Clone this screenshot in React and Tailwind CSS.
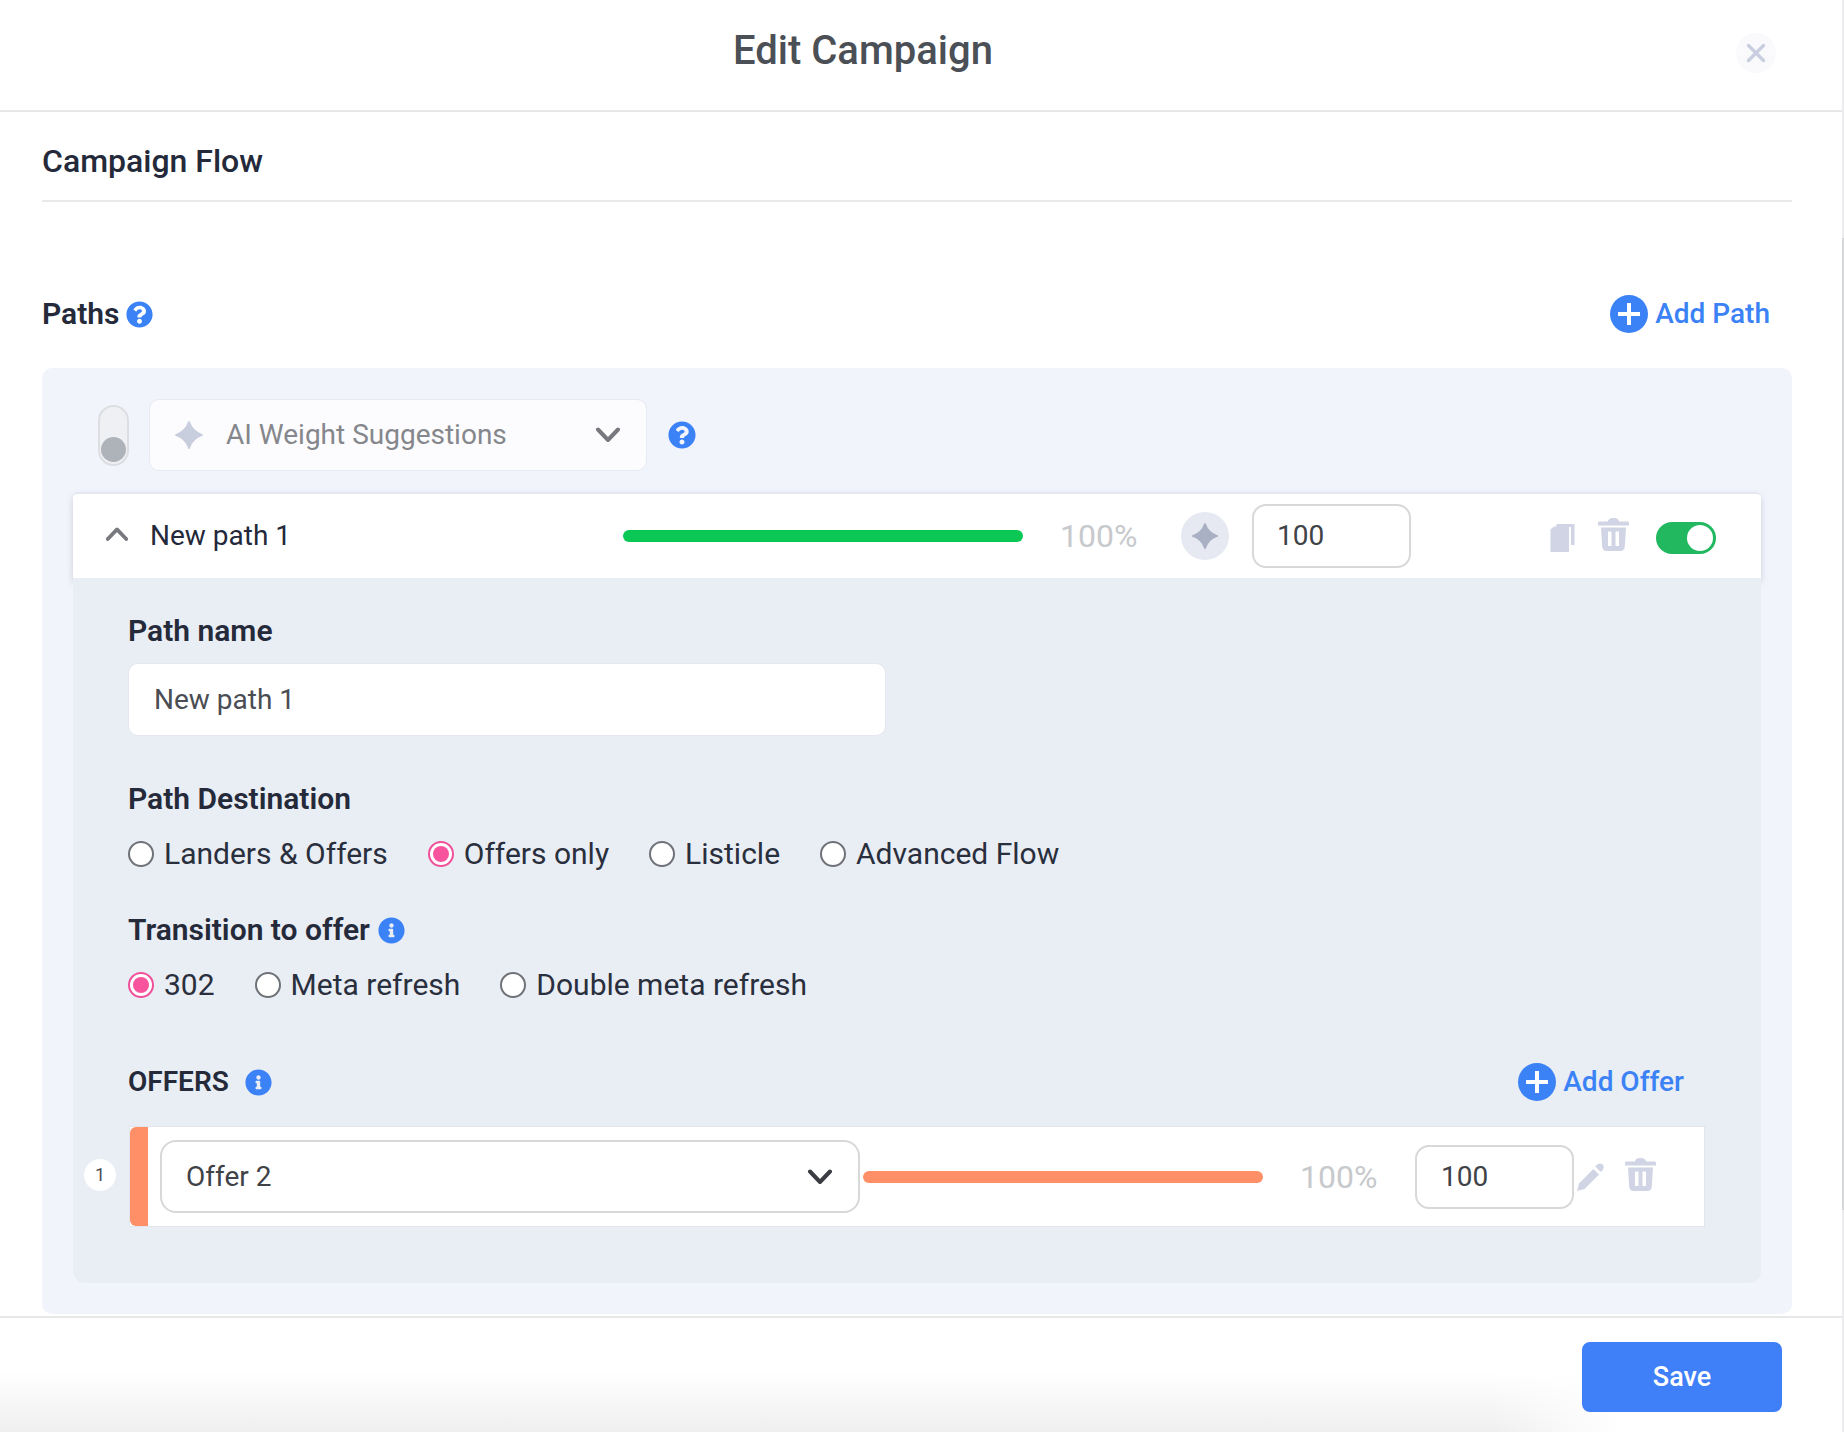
import React from "react";
import { FaQuestionCircle, FaInfoCircle } from "react-icons/fa";

const Star = ({ className }) => (
  <svg viewBox="0 0 24 24" className={className} fill="currentColor" stroke="currentColor" strokeWidth="1.4" strokeLinejoin="round">
    <path d="M12 1.500Q14.600 9.400 22.500 12 14.600 14.600 12 22.500 9.400 14.600 1.500 12 9.400 9.400 12 1.500Z" />
  </svg>
);

const Chevron = ({ className, up }) => (
  <svg viewBox="0 0 26 16" className={className} fill="none" stroke="currentColor" strokeWidth="4" strokeLinecap="round" strokeLinejoin="round">
    <path d={up ? "M3 13.500 13 3l10 10.500" : "M3 2.500 13 13 23 2.500"} />
  </svg>
);

const Trash = ({ className }) => (
  <svg viewBox="0 0 31 33" className={className} fill="currentColor">
    <path d="M10 3.500C10 1.500 12.500 0 15.500 0S21 1.500 21 3.500h8.500c1 0 1.500.6 1.500 1.500v2.500H0V5c0-.9.5-1.500 1.500-1.500H10Z" />
    <path fillRule="evenodd" d="M3 9.500h25l-1.200 19c-.2 2.800-1.800 4.500-4.300 4.500h-14c-2.500 0-4.100-1.700-4.300-4.500L3 9.500Zm7 4v14.500h3.500V13.500H10Zm7.500 0v14.500H21V13.500h-3.500Z" />
  </svg>
);

const Copy = ({ className }) => (
  <svg viewBox="0 0 24 28" className={className} fill="currentColor">
    <path d="M6 0h18v21h-3.500V3H6V0Z" />
    <path d="M0 5.500 3.500 2.500h15V28H0V5.500Z" />
  </svg>
);

const Pencil = ({ className }) => (
  <svg viewBox="0 0 28 28" className={className} fill="currentColor">
    <path d="M19.500 2.200c2-2 4.600-2.200 6.200-.6s1.400 4.200-.6 6.200l-1.300 1.300-5.600-5.600 1.300-1.300Z" />
    <path d="M16.400 5.900l5.600 5.600L7.500 26 0 28l2-7.600L16.400 5.900Z" />
  </svg>
);

const PlusButton = ({ label }) => (
  <button className="flex items-center gap-[7px] text-[28px] font-medium leading-none text-[#3b82f6]">
    <span className="relative flex h-[38px] w-[38px] items-center justify-center rounded-full bg-[#3b82f6]">
      <span className="absolute h-[4px] w-[22px] bg-white" />
      <span className="absolute h-[22px] w-[4px] bg-white" />
    </span>
    {label}
  </button>
);

const Radio = ({ label, checked, className = "" }) => (
  <label className={`flex items-center gap-[10px] text-[30px] leading-none text-[#2a2f3d] ${className}`}>
    <span className={`flex h-[26px] w-[26px] shrink-0 items-center justify-center rounded-full border-2 bg-white ${checked ? "border-[#f0509a]" : "border-[#6f7278]"}`}>
      {checked && <span className="h-[16px] w-[16px] rounded-full bg-[#f8549e]" />}
    </span>
    {label}
  </label>
);

const WeightInput = ({ className = "" }) => (
  <div className={`flex items-center rounded-[14px] border-2 border-[#d8d8d8] bg-white text-[28px] leading-none text-[#3f4247] ${className}`}>100</div>
);

export default function App() {
  return (
    <div className="relative flex h-[1432px] w-[1844px] flex-col overflow-hidden bg-white font-['Roboto',sans-serif]">
      <header className="relative flex h-[112px] shrink-0 items-center justify-center border-b-2 border-[#e6e7e9] pb-[9px] pr-[118px]">
        <h1 className="text-[40px] font-medium leading-none text-[#4b4f56]">Edit Campaign</h1>
        <button className="absolute left-[1736px] top-[33px] flex h-[40px] w-[40px] items-center justify-center rounded-full bg-[#fafafc]">
          <svg viewBox="0 0 20 20" className="h-[20px] w-[20px]" fill="none" stroke="#c9cee0" strokeWidth="3.400" strokeLinecap="round">
            <path d="M2.500 2.500l15 15M17.500 2.500l-15 15" />
          </svg>
        </button>
      </header>

      <main className="flex-1 overflow-hidden pl-[42px] pr-[52px]">
        <div className="flex h-[90px] items-center border-b-2 border-[#e8e9eb]">
          <h2 className="pt-[9px] text-[32px] font-medium leading-none text-[#252a3a]">Campaign Flow</h2>
        </div>

        <div className="flex h-[166px] items-center justify-between pt-[57px] pr-[22px]">
          <div className="flex items-center gap-[7px]">
            <span className="text-[30px] font-semibold leading-none text-[#252a3a]">Paths</span>
            <FaQuestionCircle className="h-[27px] w-[27px] translate-y-[1px] text-[#3b82f6]" />
          </div>
          <PlusButton label="Add Path" />
        </div>

        <section className="rounded-[10px] bg-[#f2f4fc] px-[31px] pt-[31px] pb-[31px]">
          <div className="flex h-[72px] items-center pl-[25px]">
            <div className="relative h-[61px] w-[31px] rounded-full border-2 border-[#dcdee2] bg-[#eff0f3]">
              <span className="absolute bottom-[2px] left-[1px] h-[25px] w-[25px] rounded-full bg-[#aeb2b9]" />
            </div>
            <div className="ml-[20px] flex h-[72px] w-[498px] items-center rounded-[10px] border border-[#e8eaf2] bg-[#fcfcfe] pl-[24px] pr-[25px]">
              <Star className="h-[30px] w-[30px] text-[#c8cede]" />
              <span className="ml-[22px] flex-1 text-[28px] leading-none text-[#85878c]">AI Weight Suggestions</span>
              <Chevron className="h-[16px] w-[26px] text-[#77797e]" />
            </div>
            <FaQuestionCircle className="ml-[21px] h-[28px] w-[28px] text-[#3b82f6]" />
          </div>

          <div className="mt-[21px] flex h-[86px] items-center rounded-t-[5px] border-t-2 border-[#e6e8ef] bg-white pl-[32px] shadow-[0_4px_6px_rgba(130,135,150,0.35)]">
            <Chevron up className="h-[16px] w-[24px] -translate-y-[2px] text-[#77797e]" />
            <span className="ml-[21px] w-[473px] text-[28px] leading-none text-[#23283a]">New path 1</span>
            <div className="h-[12px] w-[400px] rounded-full bg-[#0ac853]" />
            <span className="ml-[37px] w-[77px] text-[32px] leading-none text-[#c7c9cc]">100%</span>
            <span className="ml-[44px] flex h-[48px] w-[48px] items-center justify-center rounded-full bg-[#e6e9f2]">
              <Star className="h-[28px] w-[28px] text-[#a9b0c3]" />
            </span>
            <WeightInput className="ml-[23px] h-[64px] w-[159px] pl-[23px]" />
            <Copy className="ml-[139px] h-[28px] w-[25px] translate-y-[2px] text-[#d0d4e4]" />
            <Trash className="ml-[23px] h-[33px] w-[31px] -translate-y-[2px] text-[#d0d4e4]" />
            <div className="relative ml-[27px] h-[32px] w-[60px] translate-y-[2px] rounded-full bg-[#22b860]">
              <span className="absolute right-[3px] top-[3px] h-[26px] w-[26px] rounded-full bg-white" />
            </div>
          </div>

          <div className="rounded-b-[12px] bg-[#e9edf4] pl-[55px] pr-[55px] pt-[36px] pb-[56px]">
            <label className="block text-[30px] font-semibold leading-[34px] text-[#252a3a]">Path name</label>
            <div className="mt-[15px] flex h-[73px] w-[758px] items-center rounded-[10px] border border-[#e4e7ee] bg-white pl-[25px] text-[28px] leading-none text-[#4a4d53]">New path 1</div>

            <label className="mt-[46px] block text-[30px] font-semibold leading-[34px] text-[#252a3a]">Path Destination</label>
            <div className="mt-[24px] flex h-[28px] items-center">
              <Radio label="Landers & Offers" />
              <Radio label="Offers only" checked className="ml-[40px]" />
              <Radio label="Listicle" className="ml-[40px]" />
              <Radio label="Advanced Flow" className="ml-[40px]" />
            </div>

            <div className="mt-[45px] flex h-[34px] items-center gap-[8px]">
              <label className="text-[30px] font-semibold leading-none text-[#252a3a]">Transition to offer</label>
              <FaInfoCircle className="h-[27px] w-[27px] text-[#3b82f6]" />
            </div>
            <div className="mt-[24px] flex h-[28px] items-center">
              <Radio label="302" checked />
              <Radio label="Meta refresh" className="ml-[40px]" />
              <Radio label="Double meta refresh" className="ml-[40px]" />
            </div>

            <div className="mt-[64px] flex h-[38px] items-center justify-between pr-[22px]">
              <div className="flex items-center gap-[16px]">
                <span className="text-[28px] font-semibold leading-none text-[#252a3a]">OFFERS</span>
                <FaInfoCircle className="h-[27px] w-[27px] text-[#3b82f6]" />
              </div>
              <PlusButton label="Add Offer" />
            </div>

            <div className="relative ml-[1px] mt-[25px] flex h-[101px] w-[1576px] items-center border border-[#e3e5ea] bg-white">
              <span className="absolute -left-[46px] top-[32px] flex h-[32px] w-[32px] items-center justify-center rounded-full bg-white text-[18px] leading-none text-[#4a4d53]">1</span>
              <span className="h-full w-[18px] rounded-l-[6px] bg-[#ff8f66]" />
              <div className="ml-[12px] flex h-[73px] w-[700px] items-center justify-between rounded-[16px] border-2 border-[#d8d8d8] pl-[24px] pr-[25px] text-[28px] leading-none text-[#3f4247]">
                Offer 2
                <Chevron className="h-[16px] w-[26px] text-[#3b3d42]" />
              </div>
              <div className="ml-[3px] h-[12px] w-[400px] rounded-full bg-[#ff8f66]" />
              <span className="ml-[37px] w-[77px] text-[32px] leading-none text-[#c7c9cc]">100%</span>
              <WeightInput className="ml-[38px] h-[64px] w-[159px] pl-[24px]" />
              <Pencil className="ml-[3px] h-[28px] w-[28px] text-[#d0d4e4]" />
              <Trash className="ml-[20px] h-[33px] w-[31px] -translate-y-[2px] text-[#d0d4e4]" />
            </div>
          </div>
        </section>
      </main>

      <div className="absolute bottom-0 left-0 h-[60px] w-[1620px] bg-gradient-to-t from-[#efefef] to-transparent [mask-image:linear-gradient(to_right,black_92%,transparent)]" />

      <footer className="relative flex h-[116px] shrink-0 justify-end border-t-2 border-[#e6e7e9] pt-[24px] pr-[62px]">
        <button className="h-[70px] w-[200px] rounded-[8px] bg-[#3f80f9] text-[27px] font-medium leading-none text-white">Save</button>
      </footer>

      <div className="absolute right-0 top-0 h-[1432px] w-[2px] bg-[#ececee]" />
      <div className="absolute right-0 top-[238px] h-[972px] w-[2px] bg-[#d5d6d9]" />
    </div>
  );
}
